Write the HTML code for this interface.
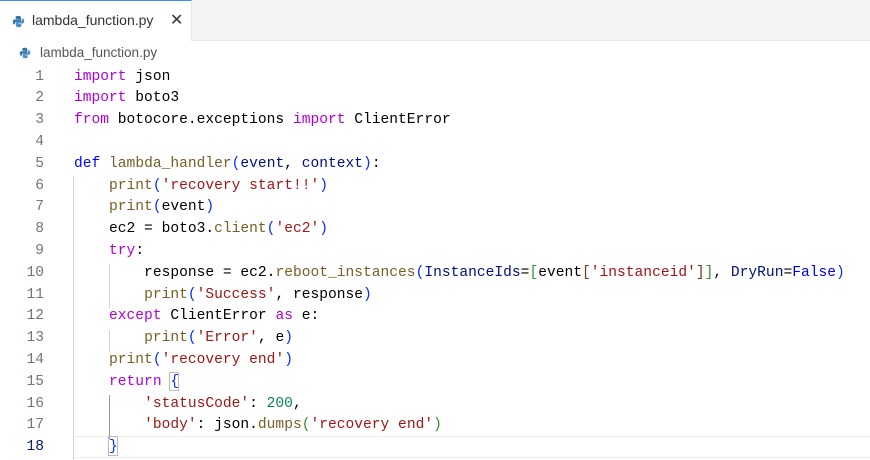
<!DOCTYPE html><html><head><style>
body{margin:0;width:870px;height:460px;background:#fff;overflow:hidden;position:relative;font-family:"Liberation Sans",sans-serif}
.tabbar{position:absolute;left:0;top:0;width:870px;height:40px;background:#f3f3f3;border-bottom:1px solid #e5e5e5}
.tab{position:absolute;left:0;top:0;width:192px;height:41px;background:#fff;border-top:1px solid #3b8eea;border-right:1px solid #e5e5e5;box-sizing:border-box}
.tab span{position:absolute;left:32px;top:11px;font-size:14px;color:#333}
.x{position:absolute;left:170px;top:9px;font-size:16px;color:#333}
.bc{position:absolute;left:40px;top:45px;font-size:13.5px;color:#555}
.ln{position:absolute;right:826px;font-family:"Liberation Mono",monospace;font-size:14.6px;color:#6e7681;text-align:right}
.code{position:absolute;left:74px;font-family:"Liberation Mono",monospace;font-size:14.6px;white-space:pre;color:#000}
.k{color:#af00db}.d{color:#0000ff}.f{color:#795e26}.s{color:#a31515}.n{color:#098658}.p{color:#001080}
.b1{color:#0431fa}.b2{color:#319331}.b3{color:#7b3814}
.g{position:absolute;width:1px;background:#d3d3d3}
</style></head><body>
<div class="tabbar"></div>
<div class="tab"><svg style="position:absolute;left:12px;top:14px" width="13" height="13" viewBox="0 0 16 16"><path d="M8 1C4 1 4.5 2.7 4.5 2.7V5h3.6v.6H3S1 5.4 1 8.5 2.8 11.6 2.8 11.6h1.1V10s0-1.8 1.8-1.8h3.6s1.7 0 1.7-1.7V2.8S11.3 1 8 1z" fill="#3572a5"/><path d="M8 15c4 0 3.5-1.7 3.5-1.7V11H7.9v-.6H13s2 .2 2-2.9-1.8-3.1-1.8-3.1h-1.1V6s0 1.8-1.8 1.8H6.7S5 7.8 5 9.5v3.7S4.7 15 8 15z" fill="#4a8fc7"/></svg><span>lambda_function.py</span><div class="x">✕</div></div>
<svg style="position:absolute;left:19px;top:47px" width="12" height="12" viewBox="0 0 16 16"><path d="M8 1C4 1 4.5 2.7 4.5 2.7V5h3.6v.6H3S1 5.4 1 8.5 2.8 11.6 2.8 11.6h1.1V10s0-1.8 1.8-1.8h3.6s1.7 0 1.7-1.7V2.8S11.3 1 8 1z" fill="#3572a5"/><path d="M8 15c4 0 3.5-1.7 3.5-1.7V11H7.9v-.6H13s2 .2 2-2.9-1.8-3.1-1.8-3.1h-1.1V6s0 1.8-1.8 1.8H6.7S5 7.8 5 9.5v3.7S4.7 15 8 15z" fill="#4a8fc7"/></svg>
<div class="bc">lambda_function.py</div>
<div style="position:absolute;left:74px;top:436px;width:796px;height:20px;border-top:1px solid #eee;border-bottom:1px solid #eee"></div>
<div class="g" style="left:73px;top:176px;height:284px"></div>
<div class="g" style="left:109px;top:264px;height:44px"></div>
<div class="g" style="left:109px;top:330px;height:22px"></div>
<div class="g" style="left:109px;top:395px;height:44px;background:#999"></div>
<div style="position:absolute;left:169px;top:372px;width:10px;height:19px;border:1px solid #bbb;box-sizing:border-box"></div>
<div style="position:absolute;left:108px;top:436px;width:10px;height:20px;border:1px solid #bbb;box-sizing:border-box"></div>
<div id="c"></div>
<script>
var L=[
'<span class="k">import</span> json',
'<span class="k">import</span> boto3',
'<span class="k">from</span> botocore.exceptions <span class="k">import</span> ClientError',
'',
'<span class="d">def</span> <span class="f">lambda_handler</span><span class="b1">(</span><span class="p">event</span>, <span class="p">context</span><span class="b1">)</span>:',
'    <span class="f">print</span><span class="b1">(</span><span class="s">\'recovery start!!\'</span><span class="b1">)</span>',
'    <span class="f">print</span><span class="b1">(</span>event<span class="b1">)</span>',
'    ec2 = boto3.<span class="f">client</span><span class="b1">(</span><span class="s">\'ec2\'</span><span class="b1">)</span>',
'    <span class="k">try</span>:',
'        response = ec2.<span class="f">reboot_instances</span><span class="b1">(</span><span class="p">InstanceIds</span>=<span class="b2">[</span>event<span class="b3">[</span><span class="s">\'instanceid\'</span><span class="b3">]</span><span class="b2">]</span>, <span class="p">DryRun</span>=<span class="d">False</span><span class="b1">)</span>',
'        <span class="f">print</span><span class="b1">(</span><span class="s">\'Success\'</span>, response<span class="b1">)</span>',
'    <span class="k">except</span> ClientError <span class="k">as</span> e:',
'        <span class="f">print</span><span class="b1">(</span><span class="s">\'Error\'</span>, e<span class="b1">)</span>',
'    <span class="f">print</span><span class="b1">(</span><span class="s">\'recovery end\'</span><span class="b1">)</span>',
'    <span class="k">return</span> <span class="b1">{</span>',
'        <span class="s">\'statusCode\'</span>: <span class="n">200</span>,',
'        <span class="s">\'body\'</span>: json.<span class="f">dumps</span><span class="b2">(</span><span class="s">\'recovery end\'</span><span class="b2">)</span>',
'    <span class="b1">}</span>'];
var h='';for(var i=0;i<L.length;i++){var t=68.5+i*21.8;h+='<div class="ln" style="top:'+t+'px;'+(i==17?'color:#0b216f':'')+'">'+(i+1)+'</div><div class="code" style="top:'+t+'px">'+L[i]+'</div>';}
document.getElementById('c').innerHTML=h;
</script>
</body></html>
